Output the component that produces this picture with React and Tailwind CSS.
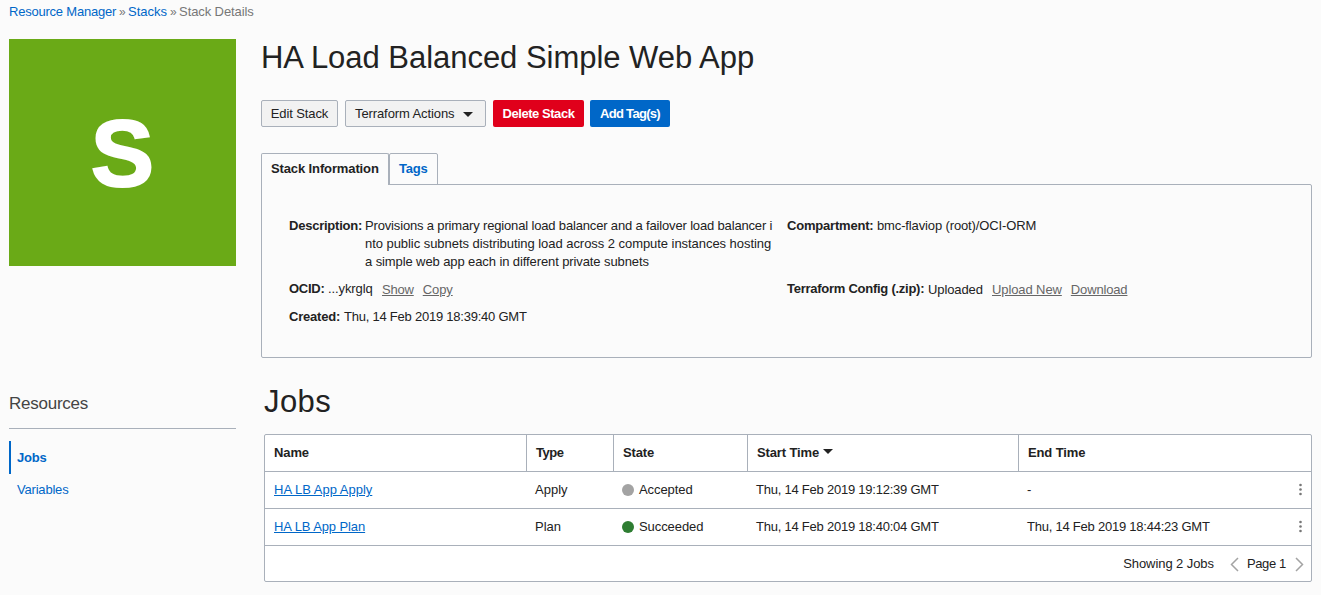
const jobs = [
  { name: "HA LB App Apply", tracking: "", type: "Apply", state: "Accepted", dot: "bg-[#a3a3a3]", start: "Thu, 14 Feb 2019 19:12:39 GMT", end: "-" },
  { name: "HA LB App Plan", tracking: "tracking-[-0.1px]", type: "Plan", state: "Succeeded", dot: "bg-[#2e7d32]", start: "Thu, 14 Feb 2019 18:40:04 GMT", end: "Thu, 14 Feb 2019 18:44:23 GMT" },
];

const columns = "grid grid-cols-[262px_87px_134px_271px_1fr]";

function Caret({ className }) {
  return (
    <svg className={className} width="10" height="5" viewBox="0 0 10 5" fill="#222">
      <path d="M0 0h10L5 5z" />
    </svg>
  );
}

function Dots() {
  return (
    <svg className="-mt-0.5" width="4" height="13" viewBox="0 0 4 13" fill="#777">
      <circle cx="2.5" cy="2" r="1.3" />
      <circle cx="2.5" cy="6.5" r="1.3" />
      <circle cx="2.5" cy="11" r="1.3" />
    </svg>
  );
}

function Chevron({ d }) {
  return (
    <svg className="mt-0.5" width="9" height="15" viewBox="0 0 9 15" fill="none" stroke="#a3a3a3" strokeWidth="1.5">
      <path d={d} />
    </svg>
  );
}

function Sidebar() {
  return (
    <aside className="w-[227px] shrink-0">
      <div className="flex h-[227px] items-center justify-center bg-[#6aaa17]">
        <span className="text-[95px] leading-[100px] font-bold text-white [-webkit-text-stroke:2px_white]">S</span>
      </div>
      <h2 className="mt-[126px] h-[37px] border-b border-[#a9b0ba] text-[17px] leading-6 tracking-[-0.25px] text-[#444]">Resources</h2>
      <nav className="mt-3 text-[#0067c8]">
        <a className="flex h-[33px] items-center border-l-2 border-[#0067c8] pl-1.5 font-bold tracking-[-0.2px]">Jobs</a>
        <a className="flex h-8 items-center pl-2 tracking-[-0.2px]">Variables</a>
      </nav>
    </aside>
  );
}

function Actions() {
  return (
    <div className="mt-6 flex h-[27px]">
      <button className="w-[77px] rounded-xs border border-[#a9b0ba] bg-[#f2f2f2] tracking-[-0.1px]">Edit Stack</button>
      <button className="ml-[7px] flex w-[141px] items-center rounded-xs border border-[#a9b0ba] bg-[#f2f2f2] pl-[9px] tracking-[-0.1px]">
        Terraform Actions
        <Caret className="mt-0.5 ml-[9px]" />
      </button>
      <button className="ml-[7px] w-[91px] rounded-xs bg-[#e0001b] font-bold tracking-[-0.45px] text-white">Delete Stack</button>
      <button className="ml-1.5 w-20 rounded-xs bg-[#0067c8] font-bold tracking-[-0.7px] text-white">Add Tag(s)</button>
    </div>
  );
}

function StackInfo() {
  return (
    <section className="mt-[26px]">
      <div className="flex h-8">
        <div className="z-10 w-32 rounded-t-xs border border-b-0 border-[#a9b0ba] bg-[#fbfbfb] pl-[9px] leading-[30px] font-bold tracking-[-0.12px]">Stack Information</div>
        <div className="w-[49px] rounded-t-xs border border-[#a9b0ba] pl-[9px] leading-[30px] font-bold tracking-[-0.2px] text-[#0067c8]">Tags</div>
      </div>
      <div className="-mt-px grid h-[174px] grid-cols-[498px_1fr] rounded-tr-xs rounded-b-xs border border-[#a9b0ba] pt-8 pl-[27px] leading-[18px] whitespace-nowrap">
        <div>
          <div className="flex">
            <b className="w-[76px] tracking-[-0.23px]">Description:</b>
            <p>
              <span className="tracking-[-0.16px]">Provisions a primary regional load balancer and a failover load balancer i</span><br />
              <span className="tracking-[-0.05px]">nto public subnets distributing load across 2 compute instances hosting</span><br />
              <span className="tracking-[-0.1px]">a simple web app each in different private subnets</span>
            </p>
          </div>
          <div className="mt-[9px] flex">
            <b className="w-[39px] tracking-[-0.25px]">OCID:</b>
            <span className="w-[54px] tracking-[-0.1px]">...ykrglq</span>
            <a className="mt-px mr-[9px] tracking-[-0.2px] text-[#666] underline">Show</a>
            <a className="mt-px tracking-[-0.1px] text-[#666] underline">Copy</a>
          </div>
          <div className="mt-[9px] flex">
            <b className="w-[55px] tracking-[-0.2px]">Created:</b>
            <span className="tracking-[-0.23px]">Thu, 14 Feb 2019 18:39:40 GMT</span>
          </div>
        </div>
        <div>
          <div className="flex h-[54px]">
            <b className="w-[90px] tracking-[-0.2px]">Compartment:</b>
            <span className="tracking-[-0.13px]">bmc-flaviop (root)/OCI-ORM</span>
          </div>
          <div className="mt-[9px] flex">
            <b className="w-[141px] tracking-[-0.26px]">Terraform Config (.zip):</b>
            <span className="mt-px w-16 tracking-[-0.1px]">Uploaded</span>
            <a className="mt-px mr-[9px] tracking-[-0.1px] text-[#666] underline">Upload New</a>
            <a className="mt-px tracking-[-0.15px] text-[#666] underline">Download</a>
          </div>
        </div>
      </div>
    </section>
  );
}

function Jobs() {
  return (
    <section className="ml-[3px]">
      <h2 className="mt-[26px] h-[50px] text-[31px] leading-9 tracking-[0.4px]">Jobs</h2>
      <div className="h-[148px] rounded-xs border border-[#a9b0ba] bg-white leading-9">
        <div className={`${columns} h-[37px] border-b border-[#a9b0ba] font-bold tracking-[-0.12px]`}>
          <div className="border-r border-[#a9b0ba] pl-[9px]">Name</div>
          <div className="border-r border-[#a9b0ba] pl-[9px] tracking-[-0.5px]">Type</div>
          <div className="border-r border-[#a9b0ba] pl-[9px]">State</div>
          <div className="flex items-center border-r border-[#a9b0ba] pl-[9px]">
            Start Time
            <Caret className="-mt-[3px] ml-1" />
          </div>
          <div className="pl-[9px]">End Time</div>
        </div>
        {jobs.map((job) => (
          <div key={job.name} className={`${columns} h-[37px] border-b border-[#a9b0ba]`}>
            <div className="pl-[9px]"><a className={`text-[#0067c8] underline ${job.tracking}`}>{job.name}</a></div>
            <div className="pl-2">{job.type}</div>
            <div className="flex items-center pl-[9px] tracking-[-0.08px]">
              <i className={`mr-1 -ml-px size-3 rounded-full ${job.dot}`} />
              <span className="ml-px">{job.state}</span>
            </div>
            <div className="pl-2 tracking-[-0.23px]">{job.start}</div>
            <div className="flex items-center justify-between pr-[9px] pl-2 tracking-[-0.23px]">
              {job.end}
              <Dots />
            </div>
          </div>
        ))}
        <div className="flex h-[35px] items-center justify-end pr-[7px]">
          <span className="mr-4 tracking-[-0.08px]">Showing 2 Jobs</span>
          <Chevron d="M8 1L1.5 7.5L8 14" />
          <span className="mr-[9px] ml-2 tracking-[-0.35px]">Page 1</span>
          <Chevron d="M1 1l6.5 6.5L1 14" />
        </div>
      </div>
    </section>
  );
}

export default function App() {
  return (
    <div className="h-[595px] w-[1321px] overflow-hidden bg-[#fbfbfb] pl-[9px] font-['Liberation_Sans',Arial,sans-serif] text-[13px] text-[#222]">
      <header className="flex h-[39px] gap-[3px] pt-0.5 leading-5 text-[#777]">
        <a className="tracking-[-0.22px] text-[#0067c8]">Resource Manager</a>
        <span className="w-1.5 text-[12px] tracking-[-1px]">»</span>
        <a className="text-[#0067c8]">Stacks</a>
        <span className="w-1.5 text-[12px] tracking-[-1px]">»</span>
        <span className="tracking-[-0.1px]">Stack Details</span>
      </header>
      <div className="flex gap-[25px]">
        <Sidebar />
        <main className="w-[1051px]">
          <h1 className="h-[37px] text-[31px] leading-[37px] tracking-[-0.03px]">HA Load Balanced Simple Web App</h1>
          <Actions />
          <StackInfo />
          <Jobs />
        </main>
      </div>
    </div>
  );
}
